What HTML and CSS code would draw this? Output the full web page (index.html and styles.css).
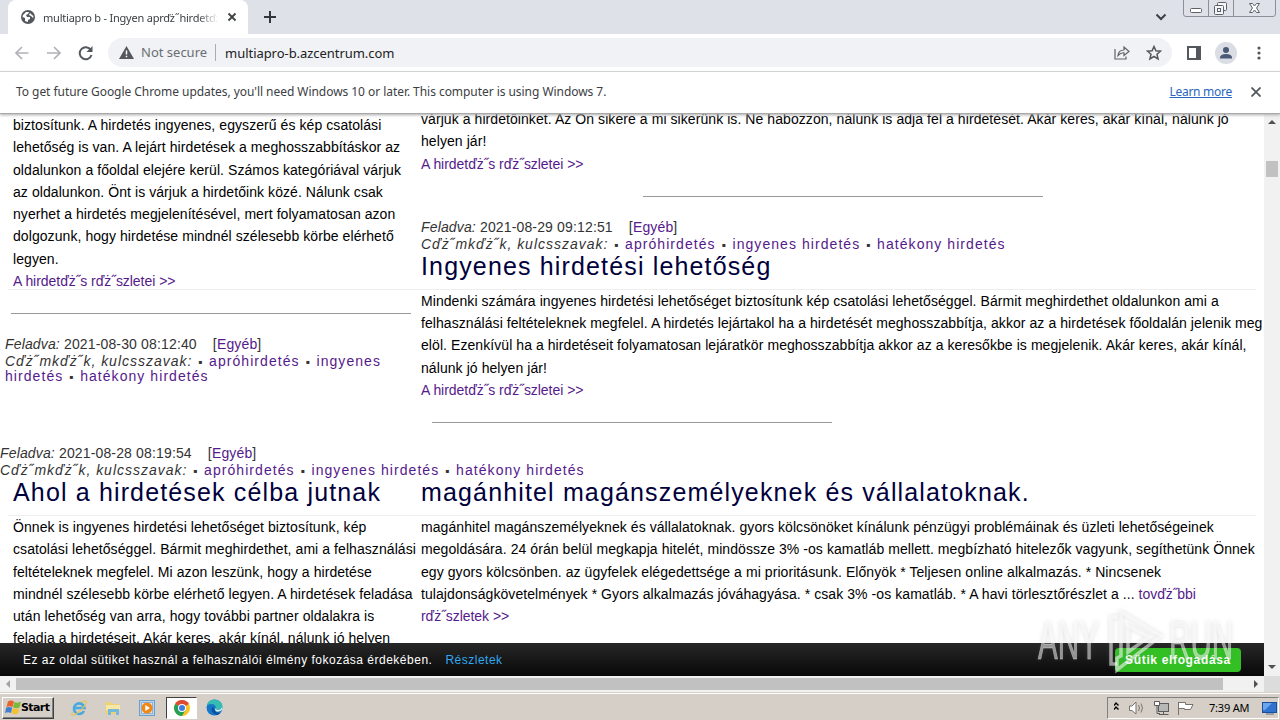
FILE: index.html
```html
<!DOCTYPE html>
<html lang="hu">

<head>
    <meta charset="UTF-8">
    <meta name="viewport" content="width=device-width, initial-scale=1.0">
    <title>multiapro b</title>
    <link rel="stylesheet" href="styles.css">
</head>

<body>
    <div class="tabstrip">
        <div class="tab">
            <svg class="globe" width="14" height="14" viewBox="0 0 14 14">
                <circle cx="7" cy="7" r="7" fill="#54585d" />
                <path d="M2 5 L5 2 L8 2 L7 4 L5 5 L6 7 L9 7 L9 9 L7 10 L7 12 L4 11 L4 8 L1.500 7 Z" fill="#fff" />
                <path d="M9 3 L11 5 L12.500 6 L12 8 L10 6 L8 5 Z" fill="#fff" />
            </svg>
            <span class="tab-title">multiapro b - Ingyen aprďż˝hirdetďż˝</span>
            <svg width="10" height="10" viewBox="0 0 10 10"><path d="M1.500 1.500 L8.500 8.500 M8.500 1.500 L1.500 8.500" stroke="#3c4043" stroke-width="1.800" /></svg>
        </div>
        <svg class="plus" width="12" height="12" viewBox="0 0 12 12"><path d="M6 0 V12 M0 6 H12" stroke="#33363a" stroke-width="2" /></svg>
        <svg class="chevron" width="12" height="8" viewBox="0 0 12 8"><path d="M1.500 1.500 L6 6 L10.500 1.500" fill="none" stroke="#3c4043" stroke-width="2" /></svg>
        <svg class="window-buttons" width="94" height="18" viewBox="0 0 94 18">
            <path d="M.5 0 V14 Q.5 16.500 3 16.500 H90 Q92.500 16.500 92.500 14 V0 M25.500 0 V16 M50.500 0 V16" fill="none" stroke="#8b8f98" />
            <rect x="7.500" y="8.500" width="11" height="4" rx="1" fill="#fff" stroke="#5c6068" />
            <g fill="#f4f5f7" stroke="#5c6068">
                <rect x="34.500" y="2.500" width="9" height="8" rx="1" />
                <rect x="31.500" y="5.500" width="9" height="9" rx="1" />
                <rect x="34.500" y="8.500" width="3" height="3" />
            </g>
            <path d="M66.500 3.500 h3 l2 2.500 2-2.500 h3 l-3 4.500 3 4.500 h-3 l-2-2.500 -2 2.500 h-3 l3-4.500 z" fill="#fff" stroke="#5c6068" />
        </svg>
    </div>

    <div class="toolbar">
        <svg class="nav" width="80" height="16" viewBox="0 0 80 16">
            <g fill="none" stroke="#b0b2b5" stroke-width="1.700">
                <path d="M14.500 8 H2 M8 2 L2 8 L8 14" />
                <path d="M33 8 H46 M40 2 L46 8 L40 14" />
            </g>
            <path d="M76.800 5 A6 6 0 1 0 77.500 10" fill="none" stroke="#54585d" stroke-width="2" />
            <path d="M78.500 1 V7 H72.500 Z" fill="#54585d" />
        </svg>
        <div class="omnibox">
            <svg width="15" height="13" viewBox="0 0 15 13">
                <path d="M7.500 0 L15 13 H0 Z" fill="#54585d" />
                <path d="M7.500 4.500 V8.500 M7.500 9.700 V11.200" stroke="#fff" stroke-width="1.500" />
            </svg>
            <span class="not-secure">Not secure</span>
            <span class="url">multiapro-b.azcentrum.com</span>
            <svg class="share" width="16" height="14" viewBox="0 0 16 14" fill="none" stroke="#5f6368" stroke-width="1.200">
                <path d="M1 3 V13 H12 V10.500" />
                <path d="M4 9.500 Q4.500 4 10 4 V1 L15 5.500 L10 9.500 V6.800 Q6.500 6.500 4 9.500 Z" />
            </svg>
            <svg width="16" height="16" viewBox="0 0 16 16"><path d="M8 1.500 L9.900 5.800 L14.500 6.200 L11 9.300 L12.100 14 L8 11.500 L3.900 14 L5 9.300 L1.500 6.200 L6.100 5.800 Z" fill="none" stroke="#54585d" stroke-width="1.500" /></svg>
        </div>
        <svg class="panel" width="14" height="14" viewBox="0 0 14 14"><path d="M1 1 H13 V13 H1 Z" fill="#fff" stroke="#54585d" stroke-width="2" /><path d="M9 1 H13 V13 H9 Z" fill="#54585d" /></svg>
        <svg class="avatar" width="22" height="22" viewBox="0 0 22 22">
            <circle cx="11" cy="11" r="11" fill="#dadde3" />
            <circle cx="11" cy="8" r="3" fill="#4a5878" />
            <path d="M5 16.500 V15 Q6 12 11 12 Q16 12 17 15 V16.500 Z" fill="#4a5878" />
        </svg>
        <svg class="menu" width="4" height="14" viewBox="0 0 4 14" fill="#54585d"><circle cx="2" cy="2" r="1.600" /><circle cx="2" cy="7" r="1.600" /><circle cx="2" cy="12" r="1.600" /></svg>
    </div>

    <div class="infobar">
        <span class="info-text">To get future Google Chrome updates, you'll need Windows 10 or later. This computer is using Windows 7.</span>
        <a class="learn">Learn more</a>
        <svg width="10" height="10" viewBox="0 0 10 10"><path d="M.5.5 L9.500 9.500 M9.500.5 L.5 9.500" stroke="#54585d" stroke-width="1.800" /></svg>
    </div>

    <div class="viewport">
        <div class="page">
            <div class="columns">
                <div class="col-left">
                    <p class="text">
                        biztosítunk. A hirdetés ingyenes, egyszerű és kép csatolási<br>
                        lehetőség is van. A lejárt hirdetések a meghosszabbításkor az<br>
                        oldalunkon a főoldal elejére kerül. Számos kategóriával várjuk<br>
                        az oldalunkon. Önt is várjuk a hirdetőink közé. Nálunk csak<br>
                        nyerhet a hirdetés megjelenítésével, mert folyamatosan azon<br>
                        dolgozunk, hogy hirdetése mindnél szélesebb körbe elérhető<br>
                        legyen.<br>
                        <a>A hirdetďż˝s rďż˝szletei &gt;&gt;</a>
                    </p>
                    <hr class="rule">
                    <div class="meta">
                        <div class="posted"><i>Feladva:</i> 2021-08-30 08:12:40 <span class="cat">[<a>Egyéb</a>]</span></div>
                        <div class="keywords"><i>Cďż˝mkďż˝k, kulcsszavak:</i> <b>▪</b> <a>apróhirdetés</a> <b>▪</b> <a>ingyenes<br>hirdetés</a> <b>▪</b> <a>hatékony hirdetés</a></div>
                    </div>
                </div>
                <div class="col-right">
                    <p class="text">
                        várjuk a hirdetőinket. Az Ön sikere a mi sikerünk is. Ne habozzon, nálunk is adja fel a hirdetését. Akár keres, akár kínál, nálunk jó<br>
                        helyen jár!<br>
                        <a>A hirdetďż˝s rďż˝szletei &gt;&gt;</a>
                    </p>
                    <hr class="rule center">
                    <div class="meta">
                        <div class="posted"><i>Feladva:</i> 2021-08-29 09:12:51 <span class="cat">[<a>Egyéb</a>]</span></div>
                        <div class="keywords"><i>Cďż˝mkďż˝k, kulcsszavak:</i> <b>▪</b> <a>apróhirdetés</a> <b>▪</b> <a>ingyenes hirdetés</a> <b>▪</b> <a>hatékony hirdetés</a></div>
                    </div>
                    <h2 class="wide">Ingyenes hirdetési lehetőség</h2>
                    <p class="text">
                        Mindenki számára ingyenes hirdetési lehetőséget biztosítunk kép csatolási lehetőséggel. Bármit meghirdethet oldalunkon ami a<br>
                        felhasználási feltételeknek megfelel. A hirdetés lejártakol ha a hirdetését meghosszabbítja, akkor az a hirdetések főoldalán jelenik meg<br>
                        elöl. Ezenkívül ha a hirdetéseit folyamatosan lejáratkör meghosszabbítja akkor az a keresőkbe is megjelenik. Akár keres, akár kínál,<br>
                        nálunk jó helyen jár!<br>
                        <a>A hirdetďż˝s rďż˝szletei &gt;&gt;</a>
                    </p>
                    <hr class="rule second">
                </div>
            </div>
            <div class="meta full">
                <div class="posted"><i>Feladva:</i> 2021-08-28 08:19:54 <span class="cat">[<a>Egyéb</a>]</span></div>
                <div class="keywords"><i>Cďż˝mkďż˝k, kulcsszavak:</i> <b>▪</b> <a>apróhirdetés</a> <b>▪</b> <a>ingyenes hirdetés</a> <b>▪</b> <a>hatékony hirdetés</a></div>
            </div>
            <div class="headings">
                <h2>Ahol a hirdetések célba jutnak</h2>
                <h2>magánhitel magánszemélyeknek és vállalatoknak.</h2>
            </div>
            <div class="columns last">
                <p class="text indent">
                    Önnek is ingyenes hirdetési lehetőséget biztosítunk, kép<br>
                    csatolási lehetőséggel. Bármit meghirdethet, ami a felhasználási<br>
                    feltételeknek megfelel. Mi azon leszünk, hogy a hirdetése<br>
                    mindnél szélesebb körbe elérhető legyen. A hirdetések feladása<br>
                    után lehetőség van arra, hogy további partner oldalakra is<br>
                    feladja a hirdetéseit. Akár keres, akár kínál, nálunk jó helyen
                </p>
                <p class="text">
                    magánhitel magánszemélyeknek és vállalatoknak. gyors kölcsönöket kínálunk pénzügyi problémáinak és üzleti lehetőségeinek<br>
                    megoldására. 24 órán belül megkapja hitelét, mindössze 3% -os kamatláb mellett. megbízható hitelezők vagyunk, segíthetünk Önnek<br>
                    egy gyors kölcsönben. az ügyfelek elégedettsége a mi prioritásunk. Előnyök * Teljesen online alkalmazás. * Nincsenek<br>
                    tulajdonságkövetelmények * Gyors alkalmazás jóváhagyása. * csak 3% -os kamatláb. * A havi törlesztőrészlet a ... <a>tovďż˝bbi<br>
                    rďż˝szletek &gt;&gt;</a>
                </p>
            </div>
            <div class="cookie">
                <span>Ez az oldal sütiket használ a felhasználói élmény fokozása érdekében.</span>
                <a>Részletek</a>
                <button>Sütik elfogadása</button>
            </div>
        </div>
        <div class="vscroll">
            <svg width="8" height="4" viewBox="0 0 8 4"><path d="M0 4 L4 0 L8 4 Z" fill="#505050" /></svg>
            <div class="vthumb"></div>
            <svg class="down" width="8" height="4" viewBox="0 0 8 4"><path d="M0 0 H8 L4 4 Z" fill="#505050" /></svg>
        </div>
    </div>
    <div class="hscroll">
        <svg width="4" height="8" viewBox="0 0 4 8"><path d="M4 0 V8 L0 4 Z" fill="#a3a3a3" /></svg>
        <div class="hthumb"></div>
        <svg class="right" width="4" height="8" viewBox="0 0 4 8"><path d="M0 0 V8 L4 4 Z" fill="#505050" /></svg>
        <div class="corner"></div>
    </div>

    <div class="taskbar">
        <div class="start">
            <svg width="16" height="15" viewBox="0 0 16 15">
                <path d="M3 1.500 Q6 -.5 9 1.500 L7.500 7 Q4.500 5.500 1.500 7 Z" fill="#e8622c" />
                <path d="M9.500 2 Q12.500 3.500 16 1.500 L14.500 7.500 Q11 9 8 7.300 Z" fill="#7cb83c" />
                <path d="M1.200 7.600 Q4.200 6.200 7.200 7.700 L6 13 Q3 11.500 0 13 Z" fill="#3f7fd0" />
                <path d="M7.800 8 Q11 9.600 14.300 8.200 L13 13.500 Q10 15 6.600 13.300 Z" fill="#f4c132" />
            </svg>
            <span>Start</span>
        </div>
        <div class="apps">
            <svg width="18" height="18" viewBox="0 0 18 18">
                <path d="M14 12 A5.300 5.300 0 1 1 14.500 9 H5" fill="none" stroke="#49a9de" stroke-width="2.600" />
                <path d="M3 13 Q0 17.500 4 16 Q12 12 16 4.500 Q17.500 .5 11 3" fill="none" stroke="#e6c45c" stroke-width="1.200" />
            </svg>
            <svg width="18" height="18" viewBox="0 0 18 18">
                <path d="M1.500 3 H7 L8 5 H15 V15 H1.500 Z" fill="#edd176" />
                <path d="M2 6 H16 V11 H2 Z" fill="#f7e7a4" />
                <path d="M4 16 V10 H15 V16 H12 V13 H7 V16 Z" fill="#75b8da" />
            </svg>
            <svg width="18" height="18" viewBox="0 0 18 18">
                <rect x="1.500" y="1.500" width="15" height="15" fill="#bfd4e8" stroke="#6a9fd0" />
                <rect x="3.500" y="3.500" width="11" height="11" fill="#dfe9f0" stroke="#8eb3d6" />
                <circle cx="9" cy="9" r="5.500" fill="#f08718" />
                <path d="M7.300 6 L12 9 L7.300 12 Z" fill="#fff" />
            </svg>
            <div class="active">
                <svg width="16" height="16" viewBox="0 0 16 16">
                    <circle cx="8" cy="8" r="8" fill="#f9c524" />
                    <path d="M8 8 L1.100 4 A8 8 0 0 1 14.900 4 Z" fill="#dc4a38" />
                    <path d="M8 8 L1.100 4 A8 8 0 0 0 8 16 L11.500 10 Z" fill="#25a05a" />
                    <circle cx="8" cy="8" r="4" fill="#fff" />
                    <circle cx="8" cy="8" r="3" fill="#3f7de0" />
                </svg>
            </div>
            <svg width="17" height="17" viewBox="0 0 17 17">
                <circle cx="8.500" cy="8.500" r="8" fill="#1676c8" />
                <path d="M1 7 Q2 .5 8.500 .5 Q16 1 16.500 7.500 Q16 11 12 11 Q9 11 10 8.500 Q9 4.500 5 5 Q2 5 1 7 Z" fill="#35bdb2" />
                <path d="M10 8.500 Q8.500 10 9.500 12 Q12 13.500 15.500 11.500 Q16.500 10 16.500 7.500 Q15 11 12 11 Q9.500 11 10 8.500 Z" fill="#d9edf4" />
                <path d="M6 8 Q4 14 11 16 Q13 15.500 14.500 13.500 Q9 15 8 9 Z" fill="#0f4f9c" />
            </svg>
        </div>
        <div class="tray">
            <svg width="80" height="18" viewBox="0 0 80 18">
                <path d="M0 6.500 L2 4 L4.500 6.500 M0 10.500 L2 8 L4.500 10.500" fill="none" stroke="#000" stroke-width="1.400" />
                <path d="M15.500 7 H18 L22 3 V15 L18 11.500 H15.500 Z" fill="#fff" stroke="#77736c" />
                <path d="M24.500 6 Q26.500 9 24.500 12 M27 4.500 Q30 9 27 13.500" fill="none" stroke="#77736c" />
                <rect x="44.500" y="4.500" width="10" height="8" fill="#b7b7b7" stroke="#5c5c5c" />
                <path d="M49.500 12.500 V15.500 M45 15.500 H54.500" fill="none" stroke="#5c5c5c" />
                <path d="M40.500 2.500 H45.500 V6.500 H40.500 Z" fill="#fff" stroke="#5c5c5c" />
                <path d="M43 6.500 V14.500 H46" fill="none" stroke="#5c5c5c" />
                <path d="M64.500 16 V3 M64.500 3.500 H71.500 V5.500 H79 L76.500 10.500 H70.500 V9.500 H64.500" fill="#fff" stroke="#77736c" />
            </svg>
            <span>7:39 AM</span>
            <svg width="15" height="14" viewBox="0 0 15 14"><rect x=".5" y="1.500" width="14" height="10" fill="#2f72cf" stroke="#17509f" /><path d="M1 2 H10 L3 9 H1 Z" fill="#69a6ec" /><path d="M4 13 H12" stroke="#5b6f85" /></svg>
        </div>
    </div>

    <div class="watermark">
        <span>ANY</span>
        <svg width="58" height="66" viewBox="0 0 58 66" fill="none" stroke="#fff" stroke-opacity=".55" stroke-width="3.500">
            <path d="M11 9 H4 V56 H10" />
            <path d="M10 62 V50 L14 48 V4 L54 28 Z" />
            <path d="M21 18 V44 L42 29 Z" />
        </svg>
        <span>RUN</span>
    </div>
</body>

</html>
```
FILE: styles.css
```css
* {
    box-sizing: border-box;
}

body {
    margin: 0;
    width: 1280px;
    height: 720px;
    overflow: hidden;
    position: relative;
    background: #fff;
    font-family: "Liberation Sans", Arial, sans-serif;
}

svg {
    display: block;
    flex-shrink: 0;
}

p,
h2 {
    margin: 0;
}

.tabstrip {
    display: flex;
    height: 34px;
    padding-left: 8px;
    background: #dee1e8;
}

.tab {
    display: flex;
    align-items: center;
    width: 240px;
    padding: 0 11px 0 13px;
    background: #fff;
    border-radius: 8px 8px 0 0;
    font: 11px "Noto Sans", sans-serif;
    color: #3c4043;
}

.tab-title {
    width: 175px;
    margin: 0 9px 0 8px;
    white-space: nowrap;
    letter-spacing: -0.22px;
    -webkit-mask-image: linear-gradient(to right, #000 155px, transparent 175px);
    mask-image: linear-gradient(to right, #000 155px, transparent 175px);
}

.plus {
    margin: 11px 0 0 16px;
}

.chevron {
    margin: 13px 16px 0 auto;
}

.window-buttons {
    margin-right: 3px;
}

.toolbar {
    display: flex;
    align-items: center;
    height: 38px;
    padding: 0 20px 0 14px;
    border-bottom: 1px solid #d9dadd;
}

.omnibox {
    display: flex;
    align-items: center;
    width: 1064px;
    height: 29px;
    margin-left: 14px;
    padding: 0 10px 0 11px;
    border-radius: 15px;
    background: #f0f2f5;
    font: 13px "Noto Sans", sans-serif;
    color: #202124;
}

.not-secure {
    margin: 0 9px 0 7px;
    padding-right: 8px;
    border-right: 1px solid #a9acb1;
    line-height: 17px;
    color: #6a6e73;
}

.url {
    letter-spacing: -0.05px;
}

.share {
    margin: 0 16px 0 auto;
}

.panel {
    margin-left: 15px;
}

.avatar {
    margin: 0 20px 0 14px;
}

.menu {
    margin-right: -2px;
}

.infobar {
    display: flex;
    align-items: center;
    position: relative;
    height: 42px;
    padding: 0 19px 2px 16px;
    border-bottom: 1px solid #a9a9a9;
    box-shadow: 0 1px 3px #aaa;
    background: #fff;
    font: 12px "Noto Sans", sans-serif;
    letter-spacing: -0.05px;
    color: #3c4043;
    z-index: 1;
}

.learn {
    margin: 0 19px 0 auto;
    letter-spacing: -0.27px;
    color: #2a66bd;
    text-decoration: underline;
}

.viewport {
    display: flex;
    height: 562px;
}

.page {
    position: relative;
    width: 1264px;
    overflow: hidden;
}

.page a {
    color: #551a8b;
}

.columns {
    display: grid;
    grid-template-columns: 421px 1fr;
    height: 331px;
}

.col-left {
    padding-left: 5px;
}

.col-right {
    margin-top: -6px;
}

.text {
    font-size: 14px;
    line-height: 22.3px;
    letter-spacing: 0.07px;
    white-space: nowrap;
    color: #000;
}

.text a {
    letter-spacing: -0.04px;
}

.col-left .text {
    padding-left: 8px;
}

.indent {
    padding-left: 13px;
}

.rule {
    width: 400px;
    height: 1px;
    border: 0;
    margin: 21px 0 22px 6px;
    background: #999;
}

.rule.center {
    margin: 21px 0 22px 222px;
}

.rule.second {
    margin-left: 11px;
}

.meta {
    color: #333;
    font-size: 14px;
    white-space: nowrap;
}

.posted {
    height: 18px;
    line-height: 17px;
    letter-spacing: 0.15px;
}

.cat {
    margin-left: 12px;
}

.keywords {
    line-height: 15px;
    letter-spacing: 1.06px;
}

.keywords i {
    letter-spacing: 0.98px;
}

.keywords b {
    padding: 0 0.8px;
    font-size: 12px;
    font-weight: normal;
    line-height: 1;
}

h2 {
    height: 38px;
    font-size: 25px;
    font-weight: normal;
    line-height: 28px;
    letter-spacing: 1.15px;
    white-space: nowrap;
    color: #00003c;
}

.wide {
    margin: 0 8px 0 -413px;
    padding-left: 413px;
    border-bottom: 1px solid #eee;
}

.headings {
    display: grid;
    grid-template-columns: 408px 1fr;
    height: 38px;
    margin: 0 8px;
    padding-left: 5px;
    border-bottom: 1px solid #eee;
}

.cookie {
    position: absolute;
    left: 0;
    right: 0;
    bottom: 0;
    display: flex;
    align-items: center;
    height: 33px;
    padding: 0 23px;
    background: linear-gradient(#272727, #080808);
    color: #fff;
    font-size: 12px;
    letter-spacing: 0.5px;
}

.cookie a {
    margin-left: 13px;
    color: #31a8f0;
}

.cookie button {
    width: 126px;
    height: 24px;
    margin-left: auto;
    padding: 0;
    border: 0;
    border-radius: 4px;
    background: #32c024;
    color: #fff;
    font: bold 12px "Liberation Sans", Arial, sans-serif;
    letter-spacing: 0.65px;
}

.vscroll {
    display: flex;
    flex-direction: column;
    align-items: center;
    width: 16px;
    padding: 6px 0 7px;
    background: #f1f1f1;
}

.vthumb {
    width: 12px;
    height: 16px;
    margin-top: 37px;
    background: #c1c1c1;
}

.down {
    margin-top: auto;
}

.hscroll {
    display: flex;
    align-items: center;
    height: 16px;
    padding-left: 6px;
    background: #f1f1f1;
}

.hthumb {
    width: 1207px;
    height: 12px;
    margin-left: 6px;
    background: #c1c1c1;
}

.right {
    margin: 0 6px 0 auto;
}

.corner {
    width: 16px;
    height: 16px;
    background: #dcdcdc;
}

.taskbar {
    display: flex;
    align-items: center;
    height: 28px;
    padding: 2px 1px 0 2px;
    border-top: 1px solid #d4d0c8;
    box-shadow: inset 0 1px #fff;
    background: #d6cfc7;
}

.start {
    display: flex;
    align-items: center;
    width: 52px;
    height: 22px;
    padding-left: 2px;
    border: 1px solid;
    border-color: #fff #404040 #404040 #fff;
    box-shadow: inset -1px -1px #808080;
    font: bold 11px "DejaVu Sans", sans-serif;
    letter-spacing: -0.6px;
    color: #000;
}

.apps {
    display: flex;
    align-items: center;
    margin-left: 16px;
    gap: 16px;
}

.active {
    display: flex;
    align-items: center;
    justify-content: center;
    width: 31px;
    height: 22px;
    margin: 0 -7px 0 -6px;
    border: 1px solid;
    border-color: #404040 #fff #fff #404040;
    background: #fff;
}

.tray {
    display: flex;
    align-items: center;
    width: 172px;
    height: 22px;
    margin-left: auto;
    padding: 0 1px 0 6px;
    border: 1px solid;
    border-color: #808080 #fff #fff #808080;
    font: 11px "Noto Sans", sans-serif;
    letter-spacing: -0.2px;
    color: #000;
}

.tray span {
    margin: 0 auto 0 15px;
}

/* logo laid over the page corner */
.watermark {
    position: absolute;
    left: 1038px;
    top: 606px;
    display: flex;
    align-items: center;
    gap: 4px;
    filter: drop-shadow(0 0 2px rgba(110, 110, 110, 0.4));
    z-index: 2;
}

.watermark span {
    width: 65px;
    font: 53px "Liberation Sans", sans-serif;
    line-height: 70px;
    color: rgba(255, 255, 255, 0.5);
    -webkit-text-stroke: 1px rgba(255, 255, 255, 0.35);
    transform: scaleX(0.56);
    transform-origin: left;
}
```
